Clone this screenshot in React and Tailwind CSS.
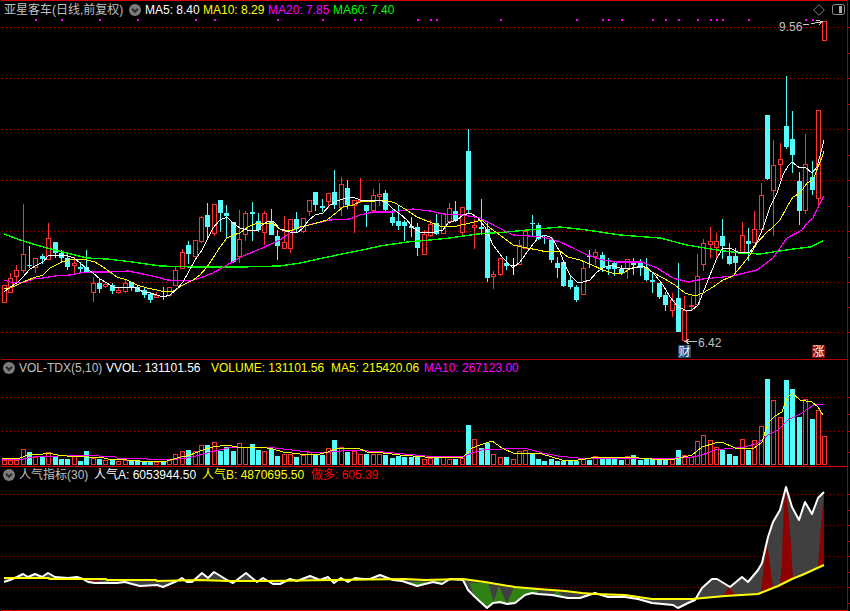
import React from "react";

// candle data: [x, bodyTop, bodyBottom, high, low, type]  r = up, c = down, w = doji
const candles = [
  [4.3,285,303,285,303,"r"],[10.3,278,293,273,293,"r"],[16.3,270,277,265,285,"r"],[23.3,254,271,204,273,"r"],[29.3,265,266,246,268,"c"],
  [35.3,258,268,258,273,"r"],[42.3,256,259,254,264,"c"],[48.3,238,260,223,260,"r"],[55.3,242,253,242,258,"c"],[61.3,253,258,250,262,"c"],
  [67.3,258,267,254,270,"c"],[74.3,263,266,257,274,"r"],[80.3,267,269,262,273,"c"],[86.3,267,273,250,273,"c"],[93.3,283,293,277,302,"r"],
  [99.3,283,289,279,293,"c"],[105.3,284,287,282,288,"r"],[112.3,285,291,283,294,"c"],[118.3,290,293,287,294,"r"],[125.3,283,292,280,293,"r"],
  [131.3,282,288,282,291,"c"],[137.3,287,292,285,292,"c"],[144.3,290,295,287,298,"c"],[150.3,294,300,292,303,"c"],[156.3,295,298,292,298,"r"],
  [163.3,296,297,287,300,"c"],[169.3,287,296,287,297,"r"],[175.3,270,286,267,286,"r"],[182.3,252,269,249,269,"r"],[188.3,245,254,241,264,"c"],
  [195.3,240,257,240,257,"r"],[201.3,217,242,216,243,"r"],[207.3,215,227,203,240,"c"],[214.3,204,234,204,236,"r"],[220.3,200,213,200,232,"c"],
  [226.3,213,216,205,238,"c"],[233.3,222,262,222,263,"c"],[239.3,239,257,210,263,"r"],[245.3,213,235,211,241,"r"],[252.3,212,214,202,241,"c"],
  [258.3,221,230,213,232,"c"],[264.3,213,233,211,245,"r"],[271.3,221,235,209,235,"c"],[277.3,236,246,230,260,"c"],
  [284.3,242,249,216,249,"r"],[290.3,219,249,219,253,"r"],[296.3,219,229,212,232,"c"],[303.3,218,232,218,233,"r"],[309.3,200,212,200,216,"r"],
  [315.3,192,205,192,211,"c"],[322.3,206,208,199,212,"c"],[328.3,193,202,193,208,"r"],[334.3,192,205,170,209,"c"],[341.3,184,208,177,216,"r"],
  [347.3,188,205,180,209,"c"],[354.3,200,206,200,233,"r"],[360.3,200,202,178,203,"r"],[366.3,205,211,205,227,"c"],[373.3,195,211,189,212,"r"],
  [379.3,194,197,183,206,"r"],[385.3,193,210,190,211,"c"],[392.3,217,223,210,226,"c"],[398.3,221,226,206,230,"c"],[404.3,222,226,220,241,"c"],
  [411.3,226,228,217,237,"c"],[417.3,227,248,223,256,"c"],[424.3,234,255,230,255,"r"],[430.3,224,236,220,237,"r"],[436.3,223,234,214,235,"c"],
  [443.3,213,234,213,234,"r"],[449.3,208,222,203,224,"r"],[455.3,211,221,201,222,"c"],[462.3,207,233,207,236,"r"],[468.3,151,210,129,213,"c"],
  [474.3,225,228,219,249,"r"],[481.3,227,229,199,235,"c"],[487.3,229,278,223,282,"c"],[493.3,274,277,271,289,"r"],[500.3,258,275,258,276,"r"],
  [506.3,263,266,256,270,"c"],[513.3,265,266,258,275,"w"],[519.3,245,265,240,265,"r"],[525.3,231,249,230,249,"r"],[532.3,223,224,215,237,"c"],
  [538.3,225,239,223,240,"c"],[544.3,235,236,235,244,"c"],[551.3,239,260,237,263,"c"],[557.3,263,268,257,278,"c"],
  [563.3,262,286,261,287,"c"],[570.3,280,287,276,289,"c"],[576.3,287,300,285,302,"c"],[583.3,268,295,262,295,"r"],[589.3,256,257,250,268,"c"],
  [595.3,252,257,249,265,"r"],[602.3,255,268,252,272,"c"],[608.3,266,269,258,275,"c"],[614.3,263,269,261,276,"c"],[621.3,269,273,265,275,"c"],
  [627.3,259,269,259,279,"r"],[633.3,262,265,258,275,"c"],[640.3,263,268,259,276,"c"],[646.3,268,280,258,281,"c"],[652.3,280,282,272,293,"c"],
  [659.3,283,297,283,299,"c"],[665.3,295,305,292,311,"c"],[672.3,300,311,293,317,"r"],[678.3,298,332,263,332,"c"],[684.3,310,341,296,341,"r"],
  [691.3,305,307,297,310,"r"],[697.3,276,305,254,305,"r"],[703.3,243,265,239,271,"r"],[710.3,241,245,227,258,"r"],[716.3,241,248,233,258,"r"],
  [722.3,236,246,219,259,"c"],[729.3,256,264,243,265,"c"],[735.3,256,263,248,273,"c"],[742.3,235,253,222,253,"r"],[748.3,241,244,228,261,"c"],
  [754.3,229,243,211,243,"r"],[761.3,195,230,183,230,"r"],[767.3,115,179,115,180,"c"],[773.3,165,191,140,236,"r"],[780.3,159,165,143,180,"r"],
  [786.3,126,147,76,149,"c"],[792.3,139,155,111,173,"c"],[799.3,181,211,172,225,"c"],[805.3,164,211,134,214,"r"],[812.3,177,190,161,195,"c"],
  [818.3,110,199,110,208,"r"],[824.5,21,41,21,41,"r"],
];

// volume bar heights, same order as candles
const volumes = [
  5.3,5.3,5.3,16.3,12.7,8,8,13.3,9,5.7,5.7,8.7,4.3,13.7,7.3,5.7,5.3,6,4.3,5,4.7,3.7,4,2.7,3.3,3.3,5.3,11.3,14.3,14.7,14.3,20.3,19.7,23,14,18,13.7,22.3,17.7,20.7,14.7,14.3,15.7,8.7,
  10.7,11.3,8,9.7,13,10.7,10.3,17.3,24.7,18.3,13,13.7,10.7,10.7,11.3,10.7,10.3,7,9,8.3,8.3,8.3,6.3,
  6.7,7,9,6.3,5.7,7,39.7,26.3,17.3,22.3,11.3,8.3,7.7,6.3,13.7,15,12.3,6.3,4.3,5.7,3.7,4.3,3.7,3.7,7.3,5.3,9,6.3,5.7,5.7,5.3,9.3,9.7,4.7,5.7,5.7,5.7,4.7,5.7,14.7,10.3,8,24.3,30.3,25.3,18.3,14.7,10.7,8.7,26.3,15,25.3,39.3,85.7,65.3,48.3,84.7,75.7,47.7,66.3,45.7,55.3,29.3,
];

const ma5 = "4,292 10,287 17,283 23,277 30,269 37,265 43,262 48,256 55,255 62,255 68,256 74,258 80,263 86,268 93,273 100,279 107,283 113,287 119,287 132,287 137,288 143,292 150,293 157,295 163,297 170,295 177,289 183,282 188,273 195,260 202,250 207,240 213,228 220,220 227,217 233,223 240,228 247,230 258,230 262,225 267,222 273,221 280,229 285,231 290,232 297,233 303,228 309,220 315,215 323,213 330,205 337,201 343,199 353,197 360,200 373,201 380,200 387,203 393,209 400,214 407,220 413,228 420,232 430,233 443,230 448,223 457,220 463,215 470,213 477,217 485,227 493,245 503,258 513,268 520,262 530,248 538,238 545,235 552,238 560,252 565,265 570,275 577,282 583,282 590,280 597,272 603,268 610,265 620,268 630,269 642,266 648,268 655,275 663,285 670,297 678,307 685,310 692,310 698,305 703,293 710,275 717,258 723,248 730,248 738,252 750,252 757,242 763,228 770,207 777,193 783,175 788,166 792,162 800,168 805,167 812,173 817,167 821,152 824,140";
const ma10 = "4,289 10,288 17,285 23,282 33,278 43,275 50,268 60,263 67,260 77,259 87,260 95,262 103,267 110,272 117,277 127,280 137,285 147,288 157,290 165,292 173,291 183,285 193,280 200,275 207,267 213,258 220,247 227,238 233,235 240,233 248,227 257,223 272,223 280,229 290,231 300,227 313,224 327,220 337,212 343,207 353,205 362,201 375,201 385,200 395,203 405,209 417,217 427,221 440,226 457,226 470,223 482,220 490,228 500,235 513,245 527,248 538,250 547,252 560,251 568,257 580,260 592,265 603,270 615,274 623,273 632,268 643,266 652,272 663,278 675,285 685,293 695,296 703,293 713,287 723,280 733,276 742,265 750,255 757,243 767,232 772,228 780,220 787,207 793,197 800,193 807,183 813,180 818,167 822,157 824,151";
const ma20 = "4,280 13,283 25,282 33,279 43,278 55,276 70,275 80,273 90,272 110,272 128,271 143,274 157,277 167,280 190,281 200,278 213,273 227,265 243,256 260,249 280,240 297,228 317,223 330,220 350,219 360,215 373,212 393,212 413,209 430,211 443,214 463,215 480,218 497,227 513,235 543,237 560,242 573,248 587,255 603,260 617,262 642,262 657,268 673,278 688,282 703,279 733,276 757,270 773,258 787,238 802,230 807,223 813,218 818,207 824,196";
const ma60 = "4,234 20,240 33,244 47,248 67,253 87,258 107,259 133,262 160,266 193,267 240,267 280,266 300,263 323,258 347,253 367,249 380,246 407,242 430,240 450,238 477,234 507,232 527,230 560,227 587,230 620,235 660,238 687,245 717,250 740,253 760,254 793,249 810,247 823,241";

const volMa5 = "2,459 10,458 20,458 28,455 43,454 48,453 58,455 67,456 77,456 87,457 100,457 108,459 127,460 140,461 153,462 167,461 177,458 190,455 203,450 213,447 227,445 237,447 250,447 267,448 273,449 283,452 300,454 320,454 328,452 337,448 350,448 358,448 367,452 383,453 400,455 425,457 442,457 462,458 467,453 472,448 480,445 492,441 502,448 515,454 532,453 542,454 562,460 578,460 598,457 625,457 652,459 675,459 692,455 702,447 715,443 722,442 735,448 753,449 762,442 768,423 775,416 782,412 787,398 792,393 800,400 812,402 818,407 823,415";
const volMa10 = "2,460 17,459 23,459 33,457 57,456 83,455 115,457 117,458 147,459 167,460 187,458 200,455 210,452 233,447 267,447 283,449 317,453 330,452 353,450 383,452 425,456 462,457 472,453 482,450 502,449 525,448 542,453 558,456 578,458 612,458 638,458 675,458 692,457 702,455 715,450 733,448 745,447 758,443 768,435 778,430 788,420 802,413 815,404 823,404";

const popA = "4,582 10,580 17,577 23,574 28,577 35,574 42,577 48,573 55,577 68,578 77,577 83,579 88,582 95,583 117,583 125,582 132,584 140,586 157,585 163,587 170,584 177,581 182,578 187,582 192,582 202,573 208,578 214,572 227,580 233,583 246,573 257,582 263,578 273,584 280,584 290,579 297,581 310,576 320,580 328,577 334,583 341,578 348,582 355,578 363,579 370,579 380,575 393,580 402,581 417,586 425,584 433,582 442,584 450,579 463,580 468,590 475,597 487,608 493,603 500,602 507,604 515,603 525,595 532,593 538,594 552,595 568,598 580,598 595,593 608,597 625,597 638,599 652,603 673,605 678,608 688,603 695,600 702,588 712,579 717,579 730,587 742,577 748,582 758,570 762,563 768,537 773,522 780,510 786,487 792,507 799,520 805,502 812,514 818,498 824,492";
const popB = "4,578 48,578 50,579 83,579 106,579 107,580 156,580 157,581 200,580 227,581 267,581 333,580 405,579 425,580 463,579 485,582 515,587 538,589 565,591 582,593 595,594 625,595 652,599 692,599 725,596 758,594 778,586 792,579 802,575 824,565";

const greenAreas = [
  "469,583 488,583 494,603 487,608 475,597",
  "493,603 499,586 507,604",
  "507,604 514,587 538,589 538,594 532,593 525,595 515,603",
  "552,595 557,591 563,596",
  "167,584 172,583 163,587",
  "407,582 425,582 425,584 417,586",
  "47,577 54,577 50,578",
  "103,581 110,581 106,583",
  "432,581 442,581 438,584",
];
const redAreas = [
  "767,543 770,565 773,588 761,592 764,565",
  "786,490 789,520 791,545 793,578 780,585 782,560 783,527 784,503",
  "824,494 824,565 818,567 821,523",
  "729,587 735,595 723,596",
  "90,580 100,580 95,583",
];

// dots above the candles
const markers = [35,61,99,137,195,214,277,322,354,360,417,430,436,500,576,602,608,621,652,665,678,697,710,716,722,748,805,812];

const mainGrid = [27,78,129,180,231,282,332];
const mainTicks = [27,53,78,104,129,155,180,206,231,257,282,307,332];
const volGrid = [397,431];
const volTicks = [397,414,431,452];
const popGrid = [494,525,556,587];
const popTicks = [494,510,525,541,556,572,587,603];

const RED = "#ff3232";
const CYAN = "#54fcfc";

function GridLines({ ys, color }) {
  return ys.map((y) => (
    <line key={y} x1="2" x2="844" y1={y + 0.5} y2={y + 0.5} stroke={color} strokeDasharray="1 3" />
  ));
}

function Candle({ c }) {
  const [x, top, bot, hi, lo, type] = c;
  const cx = Math.floor(x) + 0.5;
  const color = type === "r" ? RED : type === "c" ? CYAN : "#ffffff";
  return (
    <g>
      <line x1={cx} x2={cx} y1={hi} y2={top} stroke={color} />
      <line x1={cx} x2={cx} y1={bot} y2={lo} stroke={color} />
      {type === "r" ? (
        <rect x={cx - 2} y={top + 0.5} width="4" height={Math.max(bot - top - 1, 1)} fill="#000" stroke={color} />
      ) : (
        <rect x={cx - 2.5} y={top} width="5" height={Math.max(bot - top, 1)} fill={color} />
      )}
    </g>
  );
}

function VolBar({ x, h, type }) {
  const cx = Math.floor(x) + 0.5;
  const top = Math.round(465 - h);
  if (type === "c") {
    return <rect x={cx - 2.5} y={top} width="5" height={465 - top} fill={CYAN} />;
  }
  return <rect x={cx - 2} y={top + 0.5} width="4" height={464 - top} fill="#000" stroke={RED} />;
}

function Line({ points, color, width = 1, crisp = true }) {
  return (
    <polyline
      points={points}
      fill="none"
      stroke={color}
      strokeWidth={width}
      strokeLinejoin="round"
      shapeRendering={crisp ? "crispEdges" : "auto"}
    />
  );
}

// little round arrow next to each panel title
function DownCircle() {
  return (
    <svg width="12" height="12" viewBox="0 0 12 12" className="shrink-0">
      <circle cx="6" cy="6" r="6" fill="#7c7c7c" />
      <path d="M3 4.8 L6 7.8 L9 4.8" fill="none" stroke="#2c2c2c" strokeWidth="2" />
    </svg>
  );
}

function Ticks({ height, ys, offset }) {
  return (
    <svg width="2" height={height} className="block shrink-0">
      {ys.map((y) => (
        <rect key={y} x="0" y={y - offset} width="2" height="1" fill="#c00000" />
      ))}
    </svg>
  );
}

export default function App() {
  return (
    <div className="w-[850px] h-[611px] bg-black overflow-hidden flex flex-col pl-[1px] font-['Liberation_Sans','Noto_Sans_CJK_SC',sans-serif] text-[12px] leading-4 whitespace-nowrap">

      {/* main chart */}
      <div className="relative h-[360px] flex">
        <div className="w-[847px] flex flex-col border-t border-t-[#d00000] border-b border-b-[#b00000] border-r border-r-[#a00000] box-border">
          <div className="h-[17px] pt-[1px] shrink-0 flex items-center">
            <span className="ml-[3px] w-[125px] text-[#c0c0c0]">亚星客车(日线,前复权)</span>
            <DownCircle />
            <span className="ml-[4px] w-[58px] text-white">MA5: 8.40</span>
            <span className="w-[65px] text-[#ffff00]">MA10: 8.29</span>
            <span className="w-[65px] text-[#ff00ff]">MA20: 7.85</span>
            <span className="text-[#00ff00]">MA60: 7.40</span>
            <svg width="12" height="12" viewBox="0 0 12 12" className="ml-auto shrink-0">
              <path d="M6 0.7 L11.3 6 L6 11.3 L0.7 6 Z" fill="none" stroke="#808080" />
            </svg>
            <svg width="13" height="12" viewBox="0 0 13 12" className="ml-[7px] mr-[2px] shrink-0">
              <rect x="0.5" y="0.5" width="12" height="10" rx="2" fill="none" stroke="#909090" />
              <rect x="7" y="2" width="3" height="7" fill="#a8a8a8" />
            </svg>
          </div>
          <svg width="846" height="341" viewBox="1 18 846 341" className="block">
            <g shapeRendering="crispEdges">
              <GridLines ys={mainGrid} color="#c00000" />
              {markers.map((x) => (
                <rect key={x} x={x} y="19" width="2" height="2" fill="#ff00ff" />
              ))}
              {candles.map((c) => (
                <Candle key={c[0]} c={c} />
              ))}
            </g>
            <Line points={ma60} color="#00ff00" width={1.4} />
            <Line points={ma20} color="#ff00ff" width={1.2} />
            <Line points={ma10} color="#ffff00" />
            <Line points={ma5} color="#ffffff" />
            <g shapeRendering="crispEdges">
              <path d="M803 25 L809 24 M811 24 L822 21.5 M816 20 L822 21.5 L819 25" fill="none" stroke="#d0d0d0" />
              <path d="M697 341.5 L686 341.5 M689 339 L685 341.5 L689 344" fill="none" stroke="#c0c0c0" />
            </g>
          </svg>
        </div>
        <Ticks height={360} ys={mainTicks} offset={0} />

        {/* price labels and event marks sit over the candles */}
        <span className="absolute left-[778px] top-[19px] text-[#c0c0c0]">9.56</span>
        <span className="absolute left-[697px] top-[335px] text-[#c0c0c0]">6.42</span>
        <span className="absolute left-[677px] top-[345px] w-[13px] h-[13px] bg-[#1c4a78] text-white flex items-center justify-center">财</span>
        <span className="absolute left-[811px] top-[345px] w-[13px] h-[13px] bg-[#8a0f0f] text-white flex items-center justify-center">涨</span>
      </div>

      {/* volume */}
      <div className="h-[107px] flex">
        <div className="w-[847px] flex flex-col border-b border-b-[#e00000] border-r border-r-[#a00000] box-border">
          <div className="h-[16px] shrink-0 flex items-center pl-[2px]">
            <DownCircle />
            <span className="ml-[4px] w-[87px] text-[#c0c0c0]">VOL-TDX(5,10)</span>
            <span className="w-[105px] text-white">VVOL: 131101.56</span>
            <span className="w-[120px] text-[#ffff00]">VOLUME: 131101.56</span>
            <span className="w-[93px] text-[#ffff00]">MA5: 215420.06</span>
            <span className="text-[#ff00ff]">MA10: 267123.00</span>
          </div>
          <svg width="846" height="90" viewBox="1 376 846 90" className="block">
            <g shapeRendering="crispEdges">
              <GridLines ys={volGrid} color="#c00000" />
              {candles.map((c, i) => (
                <VolBar key={c[0]} x={c[0]} h={volumes[i]} type={c[5]} />
              ))}
            </g>
            <Line points={volMa10} color="#ff00ff" />
            <Line points={volMa5} color="#ffff00" />
          </svg>
        </div>
        <Ticks height={107} ys={volTicks} offset={360} />
      </div>

      {/* popularity indicator */}
      <div className="h-[144px] flex">
        <div className="w-[847px] flex flex-col border-b border-b-[#e00000] border-r border-r-[#a00000] box-border">
          <div className="h-[16px] shrink-0 flex items-center pl-[2px]">
            <DownCircle />
            <span className="ml-[4px] w-[75px] text-[#c0c0c0]">人气指标(30)</span>
            <span className="w-[108px] text-white">人气A: 6053944.50</span>
            <span className="w-[109px] text-[#ffff00]">人气B: 4870695.50</span>
            <span className="text-[#ff0000]">做多: 605.39</span>
          </div>
          <svg width="846" height="127" viewBox="1 483 846 127" className="block">
            <g shapeRendering="crispEdges">
              <GridLines ys={popGrid} color="#a00000" />
            </g>
            <polygon points={popA + " " + popB.split(" ").reverse().join(" ")} fill="#404040" />
            {greenAreas.map((p) => (
              <polygon key={p} points={p} fill="#318014" />
            ))}
            {redAreas.map((p) => (
              <polygon key={p} points={p} fill="#8f0000" />
            ))}
            <Line points={popA} color="#ffffff" width={2} crisp={false} />
            <Line points={popB} color="#ffff00" width={2} crisp={false} />
          </svg>
        </div>
        <Ticks height={144} ys={popTicks} offset={467} />
      </div>
    </div>
  );
}
